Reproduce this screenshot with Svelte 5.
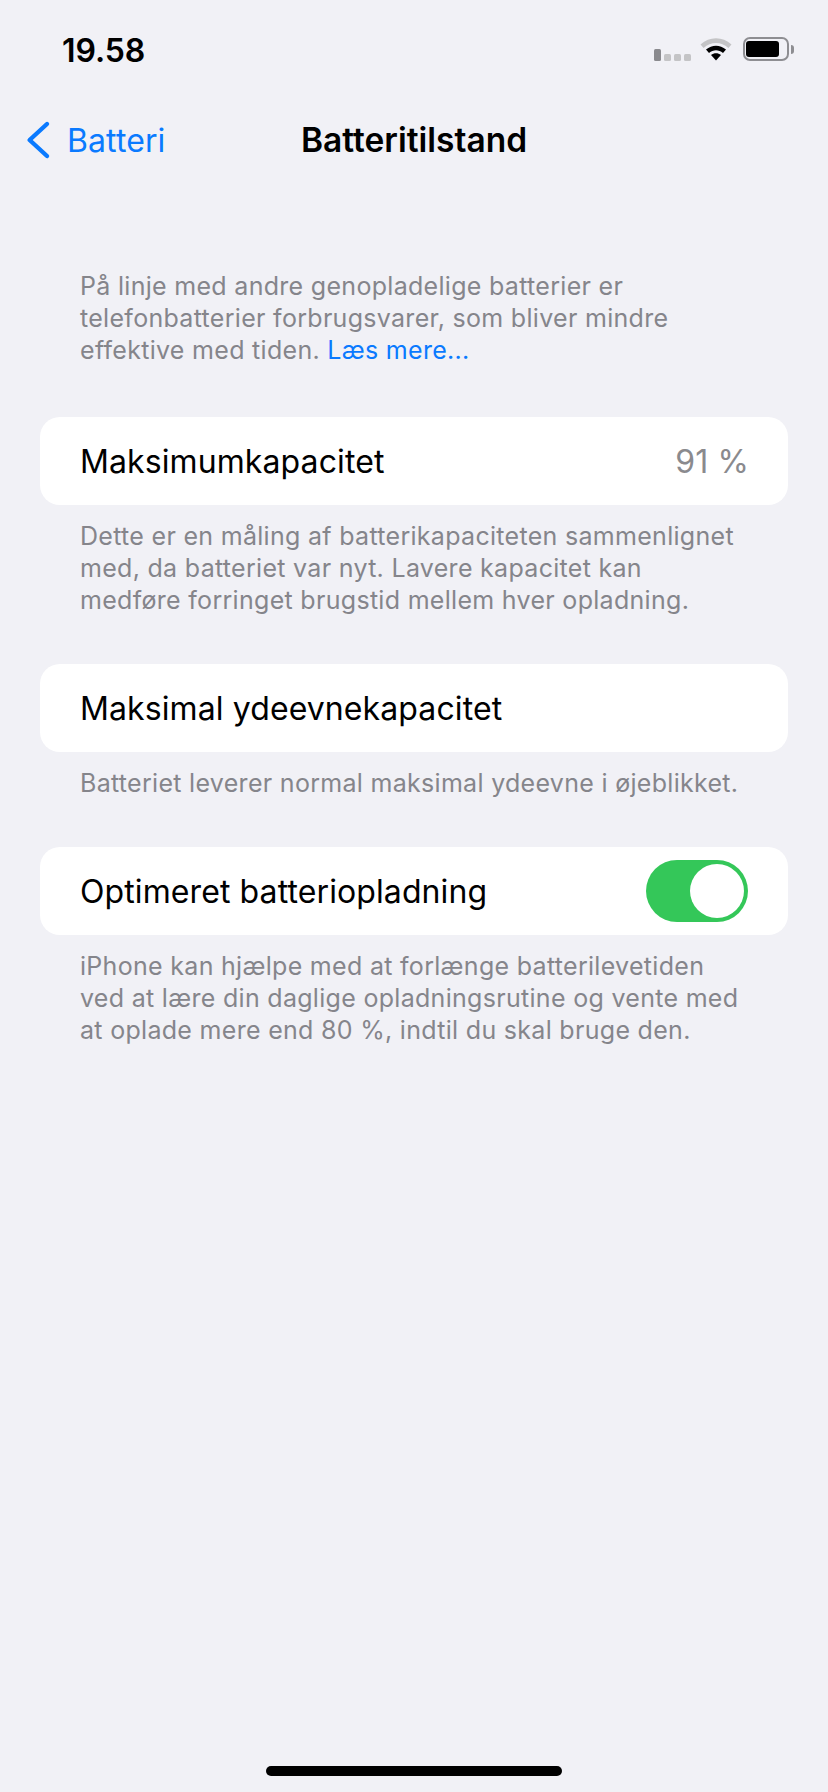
<script>
  const cards = [
    {
      label: 'Maksimumkapacitet',
      value: '91 %',
      note: ['Dette er en måling af batterikapaciteten sammenlignet', 'med, da batteriet var nyt. Lavere kapacitet kan', 'medføre forringet brugstid mellem hver opladning.']
    },
    {
      label: 'Maksimal ydeevnekapacitet',
      note: ['Batteriet leverer normal maksimal ydeevne i øjeblikket.']
    },
    {
      label: 'Optimeret batteriopladning',
      toggle: true,
      note: ['iPhone kan hjælpe med at forlænge batterilevetiden', 'ved at lære din daglige opladningsrutine og vente med', 'at oplade mere end 80 %, indtil du skal bruge den.']
    }
  ];
</script>

<div class="screen">
  <header class="status">
    <span class="time">19.58</span>
    <div class="indicators">
      <div class="signal">
        <i class="on"></i><i></i><i></i><i></i>
      </div>
      <svg class="wifi" width="32" height="24" viewBox="0 0 32 24">
        <path d="M0.5 7.5C9.5 -1 22.5 -1 31.5 7.5L28.4 10.9C21 4.2 11 4.2 3.6 10.9Z" fill="#c4c4c6" />
        <path d="M6 12.6C12 7.4 20 7.4 26 12.6L23 15.9C18.6 12.2 13.4 12.2 9 15.9Z" fill="#000" />
        <path d="M11 18C14 15.6 18 15.6 21 18L16 23.6Z" fill="#000" />
      </svg>
      <div class="battery">
        <div class="level"></div>
      </div>
      <div class="nub"></div>
    </div>
  </header>

  <nav class="navbar">
    <div class="back">
      <svg width="26" height="40" viewBox="0 0 26 40">
        <path d="M21 4L3.6 20L21 36" fill="none" stroke="#0a7aff" stroke-width="4.4" stroke-linecap="round" stroke-linejoin="round" />
      </svg>
      <span>Batteri</span>
    </div>
    <h1>Batteritilstand</h1>
  </nav>

  <main>
    <p class="intro">
      På linje med andre genopladelige batterier er<br />
      telefonbatterier forbrugsvarer, som bliver mindre<br />
      effektive med tiden. <span class="link">Læs mere...</span>
    </p>

    {#each cards as card}
      <section class="card">
        <span class="label">{card.label}</span>
        {#if card.value}
          <span class="value">{card.value}</span>
        {/if}
        {#if card.toggle}
          <div class="switch"><div class="knob"></div></div>
        {/if}
      </section>
      <p class="note">
        {#each card.note as line, i}
          {line}{#if i < card.note.length - 1}<br />{/if}
        {/each}
      </p>
    {/each}
  </main>

  <div class="home"></div>
</div>

<style>
  :global(body) {
    margin: 0;
    background: #f1f1f6;
  }

  .screen {
    position: relative;
    height: 1792px;
    background: #f1f1f6;
    font-family: Inter, "Noto Sans", sans-serif;
    color: #000;
    overflow: hidden;
  }

  .status {
    height: 100px;
    display: flex;
    align-items: center;
    justify-content: space-between;
    padding: 0 34px 0 62px;
  }

  .time {
    font-size: 32px;
    font-weight: 600;
    letter-spacing: -0.1px;
  }

  .indicators {
    display: flex;
    align-items: center;
  }

  .signal {
    display: flex;
    align-items: flex-end;
    gap: 3px;
    margin-right: 9px;
    margin-top: 10px;
  }

  .signal i {
    width: 7px;
    height: 7px;
    border-radius: 1.5px;
    background: #c4c4c6;
  }

  .signal i.on {
    height: 12px;
    background: #8a8a8e;
  }

  .wifi {
    margin-right: 11px;
    margin-top: -2px;
  }

  .battery {
    box-sizing: border-box;
    width: 46px;
    height: 24px;
    margin-top: -2px;
    padding: 2px 2px 2px 1px;
    border: 2px solid #8e8e92;
    border-radius: 7px;
  }

  .level {
    width: 33px;
    height: 100%;
    background: #000;
    border-radius: 3px;
  }

  .nub {
    width: 3px;
    height: 9px;
    margin-left: 2px;
    margin-top: -2px;
    background: #8e8e92;
    border-radius: 0 3px 3px 0;
  }

  .navbar {
    position: relative;
    height: 80px;
    display: flex;
    align-items: center;
    justify-content: center;
  }

  .back {
    position: absolute;
    left: 26px;
    top: 20px;
    display: flex;
    align-items: center;
    gap: 15px;
    color: #0a7aff;
    font-size: 32px;
    letter-spacing: 0.1px;
  }

  h1 {
    margin: 0;
    font-size: 33.5px;
    font-weight: 600;
  }

  main {
    padding: 90px 40px 0;
  }

  p {
    margin: 0;
    padding: 0 40px;
    font-size: 25px;
    line-height: 32px;
    letter-spacing: 0.3px;
    color: #85858b;
  }

  .intro {
    margin-bottom: 51px;
  }

  .link {
    color: #0a7aff;
  }

  .card {
    box-sizing: border-box;
    height: 88px;
    padding: 0 40px;
    display: flex;
    align-items: center;
    justify-content: space-between;
    background: #fff;
    border-radius: 20px;
    font-size: 32px;
    letter-spacing: 0.1px;
  }

  .value {
    margin-right: -1px;
    color: #8a8a8e;
  }

  .note {
    margin-top: 15px;
    margin-bottom: 48px;
  }

  .switch {
    box-sizing: border-box;
    width: 102px;
    height: 62px;
    padding: 4px;
    display: flex;
    justify-content: flex-end;
    background: #34c759;
    border-radius: 31px;
  }

  .knob {
    width: 54px;
    height: 54px;
    background: #fff;
    border-radius: 50%;
  }

  .home {
    position: absolute;
    left: 266px;
    bottom: 16px;
    width: 296px;
    height: 10px;
    background: #000;
    border-radius: 5px;
  }
</style>
